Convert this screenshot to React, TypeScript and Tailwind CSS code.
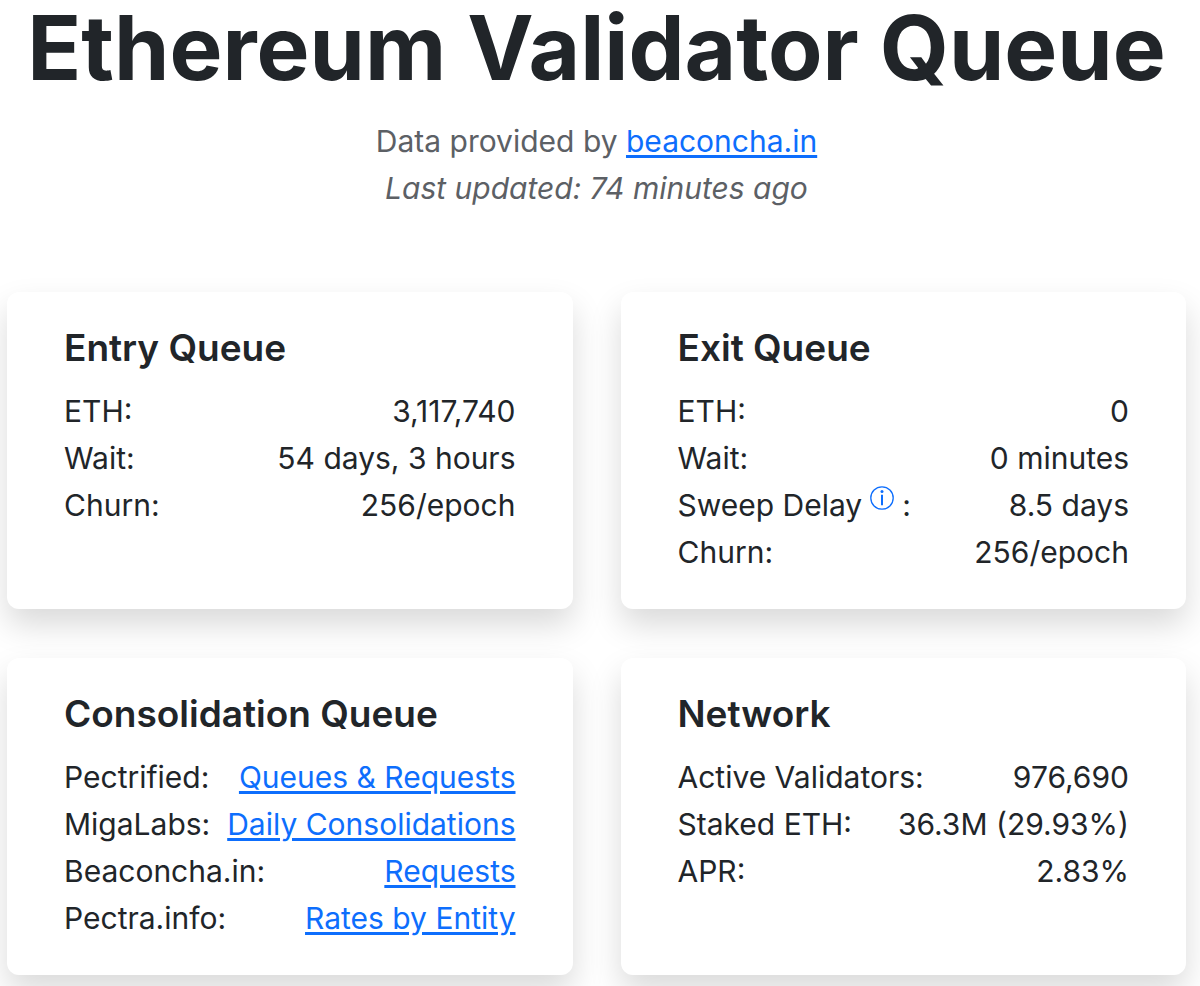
import { ReactNode } from "react"

type Row = { label: ReactNode; value: string; href?: string }

function InfoIcon() {
  return (
    <svg viewBox="0 0 24 24" fill="none" stroke="currentColor" className="h-6 w-6" aria-hidden="true">
      <circle cx="12" cy="12" r="11.2" strokeWidth="1.3" />
      <path d="M12 8.800v10.400" strokeWidth="2" />
      <circle cx="12" cy="5.400" r="1.500" fill="currentColor" stroke="none" />
    </svg>
  )
}

const cards: { title: string; rows: Row[] }[] = [
  {
    title: "Entry Queue",
    rows: [
      { label: "ETH:", value: "3,117,740" },
      { label: "Wait:", value: "54 days, 3 hours" },
      { label: "Churn:", value: "256/epoch" },
    ],
  },
  {
    title: "Exit Queue",
    rows: [
      { label: "ETH:", value: "0" },
      { label: "Wait:", value: "0 minutes" },
      {
        label: (
          <span className="flex gap-2">
            Sweep Delay
            <button type="button" aria-label="About sweep delay" className="self-start pt-1 text-[#0d6efd]">
              <InfoIcon />
            </button>
            <span>:</span>
          </span>
        ),
        value: "8.5 days",
      },
      { label: "Churn:", value: "256/epoch" },
    ],
  },
  {
    title: "Consolidation Queue",
    rows: [
      { label: "Pectrified:", value: "Queues & Requests", href: "#pectrified" },
      { label: "MigaLabs:", value: "Daily Consolidations", href: "#migalabs" },
      { label: "Beaconcha.in:", value: "Requests", href: "#beaconchain" },
      { label: "Pectra.info:", value: "Rates by Entity", href: "#pectra" },
    ],
  },
  {
    title: "Network",
    rows: [
      { label: "Active Validators:", value: "976,690" },
      { label: "Staked ETH:", value: "36.3M (29.93%)" },
      { label: "APR:", value: "2.83%" },
    ],
  },
]

function Card({ title, rows }: { title: string; rows: Row[] }) {
  return (
    <section className="rounded-xl bg-white px-[57px] pt-8 pb-[33px] shadow-[0_16px_32px_rgba(0,0,0,0.15)]">
      <h2 className="mb-4 text-[37px] leading-12 font-semibold">{title}</h2>
      <dl>
        {rows.map((row, i) => (
          <div key={i} className="flex h-[47px] items-center justify-between whitespace-nowrap">
            <dt>{row.label}</dt>
            <dd>
              {row.href ? (
                <a href={row.href} className="text-[#0d6efd] underline decoration-3 underline-offset-3">
                  {row.value}
                </a>
              ) : (
                row.value
              )}
            </dd>
          </div>
        ))}
      </dl>
    </section>
  )
}

export default function App() {
  return (
    <main className="bg-white pr-[14px] pb-3 pl-[7px] font-['Inter',sans-serif] text-[30px] leading-[47px] text-[#212529]">
      <header className="text-center">
        <h1 className="text-[89px] leading-24 font-bold whitespace-nowrap">Ethereum Validator Queue</h1>
        <p className="mt-[22px] text-[#5c6065]">
          Data provided by{" "}
          <a href="#beaconchain" className="text-[#0d6efd] underline decoration-3 underline-offset-3">
            beaconcha.in
          </a>
        </p>
        <p className="text-[#5c6065] italic">Last updated: 74 minutes ago</p>
      </header>
      <div className="mt-20 grid grid-cols-2 gap-x-12 gap-y-[49px]">
        {cards.map((card) => (
          <Card key={card.title} {...card} />
        ))}
      </div>
    </main>
  )
}
